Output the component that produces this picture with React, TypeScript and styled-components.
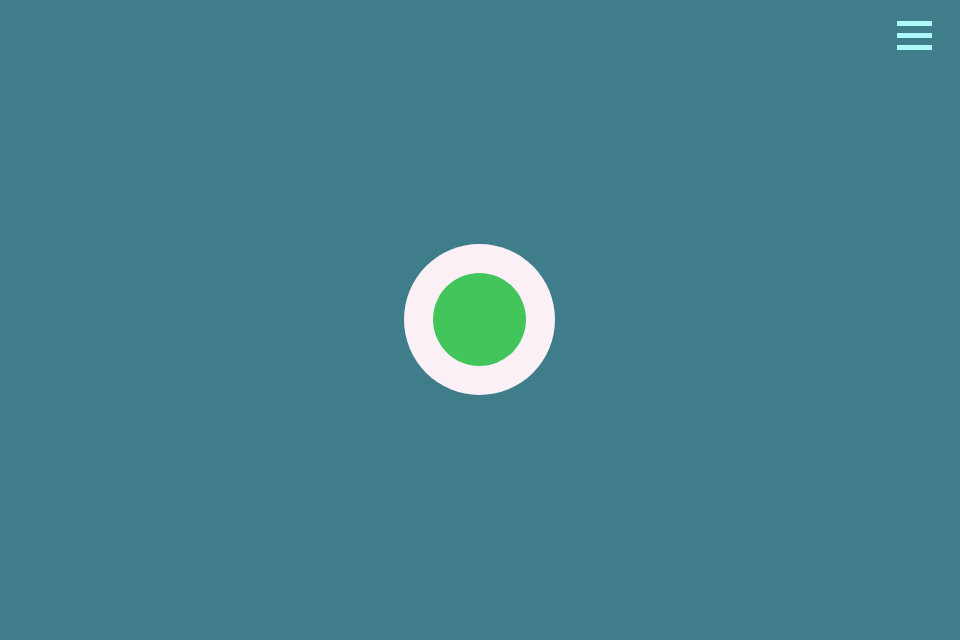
import styled, { createGlobalStyle } from "styled-components";

const GlobalStyle = createGlobalStyle`
  html, body {
    margin: 0;
    padding: 0;
    background: #3f7d8a;
    font-family: "Liberation Sans", Arial, sans-serif;
  }
`;

function App() {
  return (
    <>
      <GlobalStyle />
      <Screen>
        <MenuButton aria-label="Menu">
          <Bar />
          <Bar />
          <Bar />
        </MenuButton>
        <Ring>
          <Dot />
        </Ring>
      </Screen>
    </>
  );
}

export default App;

const Screen = styled.main`
  position: relative;
  display: flex;
  align-items: center;
  justify-content: center;
  width: 100vw;
  height: 100vh;
  background-color: #3f7d8a;
  overflow: hidden;
`;

const MenuButton = styled.button`
  position: absolute;
  top: 21px;
  right: 28px;
  display: flex;
  flex-direction: column;
  gap: 7px;
  width: 35px;
  padding: 0;
  border: none;
  background: transparent;
  cursor: pointer;
`;

const Bar = styled.span`
  display: block;
  width: 100%;
  height: 5px;
  background-color: #aef8fb;
`;

const Ring = styled.div`
  display: flex;
  align-items: center;
  justify-content: center;
  width: 151px;
  height: 151px;
  margin: 0 1px 1px 0;
  border-radius: 50%;
  background-color: #fcf0f7;
`;

const Dot = styled.div`
  width: 93px;
  height: 93px;
  border-radius: 50%;
  background-color: #42c55b;
`;
